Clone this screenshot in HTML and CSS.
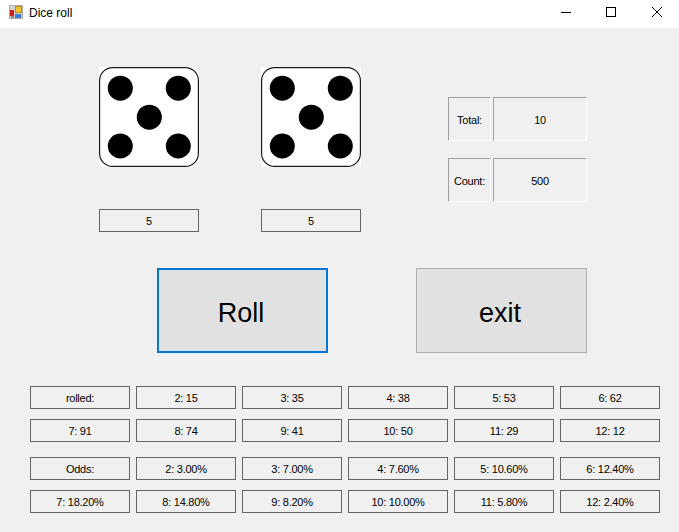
FILE: index.html
```html
<!DOCTYPE html>
<html lang="en">
<head>
    <meta charset="UTF-8">
    <title>Dice roll</title>
    <link rel="stylesheet" href="styles.css">
</head>
<body>
    <!-- title bar -->
    <header class="titlebar">
        <svg class="app-icon" width="14" height="14" viewBox="0 0 14 14">
            <rect x="0" y="0" width="14" height="14" fill="#d4d4d4"/>
            <rect x="0.5" y="0.5" width="13" height="13" fill="none" stroke="#a8a8a8"/>
            <rect x="1" y="5" width="4" height="6" fill="#c8201c"/>
            <rect x="2" y="11" width="3" height="2" fill="#8c8c8c"/>
            <rect x="6.5" y="1.5" width="6" height="6" fill="#f6c52e" stroke="#b8901c"/>
            <rect x="6" y="9" width="6" height="4" fill="#3f7fdc"/>
        </svg>
        <span class="title">Dice roll</span>
        <div class="win-buttons">
            <span class="win-btn">
                <svg width="12" height="12" viewBox="0 0 12 12"><path d="M1 6.5H11" stroke="#000" fill="none"/></svg>
            </span>
            <span class="win-btn">
                <svg width="12" height="12" viewBox="0 0 12 12"><rect x="1.5" y="1.5" width="9" height="9" stroke="#000" fill="none"/></svg>
            </span>
            <span class="win-btn">
                <svg width="12" height="12" viewBox="0 0 12 12"><path d="M2 1L12 11M12 1L2 11" stroke="#000" fill="none"/></svg>
            </span>
        </div>
    </header>

    <div class="form">
        <!-- dice and totals -->
        <div class="top">
            <div class="die-col">
                <svg class="die" width="100" height="100" viewBox="0 0 100 100">
                    <rect width="100" height="100" fill="#fff"/>
                    <rect x="0.6" y="0.6" width="98.8" height="98.8" rx="13" fill="#fff" stroke="#1c1c1c" stroke-width="1.2"/>
                    <circle cx="21.3" cy="21.2" r="12.5"/>
                    <circle cx="79.3" cy="21.2" r="12.5"/>
                    <circle cx="50.3" cy="50.2" r="12.5"/>
                    <circle cx="21.3" cy="79" r="12.5"/>
                    <circle cx="79.3" cy="79" r="12.5"/>
                </svg>
                <div class="box">5</div>
            </div>
            <div class="die-col">
                <svg class="die" width="100" height="100" viewBox="0 0 100 100">
                    <rect width="100" height="100" fill="#fff"/>
                    <rect x="0.6" y="0.6" width="98.8" height="98.8" rx="13" fill="#fff" stroke="#1c1c1c" stroke-width="1.2"/>
                    <circle cx="21.3" cy="21.2" r="12.5"/>
                    <circle cx="79.3" cy="21.2" r="12.5"/>
                    <circle cx="50.3" cy="50.2" r="12.5"/>
                    <circle cx="21.3" cy="79" r="12.5"/>
                    <circle cx="79.3" cy="79" r="12.5"/>
                </svg>
                <div class="box">5</div>
            </div>
            <div class="stats">
                <div class="stat-row">
                    <div class="sunken stat-label">Total:</div>
                    <div class="sunken stat-value">10</div>
                </div>
                <div class="stat-row">
                    <div class="sunken stat-label">Count:</div>
                    <div class="sunken stat-value">500</div>
                </div>
            </div>
        </div>

        <!-- buttons -->
        <div class="actions">
            <button class="button button-focus">Roll</button>
            <button class="button">exit</button>
        </div>

        <!-- rolled counts -->
        <div class="table">
            <div class="box">rolled:</div>
            <div class="box">2: 15</div>
            <div class="box">3: 35</div>
            <div class="box">4: 38</div>
            <div class="box">5: 53</div>
            <div class="box">6: 62</div>
            <div class="box">7: 91</div>
            <div class="box">8: 74</div>
            <div class="box">9: 41</div>
            <div class="box">10: 50</div>
            <div class="box">11: 29</div>
            <div class="box">12: 12</div>
        </div>

        <!-- odds -->
        <div class="table table-odds">
            <div class="box">Odds:</div>
            <div class="box">2: 3.00%</div>
            <div class="box">3: 7.00%</div>
            <div class="box">4: 7.60%</div>
            <div class="box">5: 10.60%</div>
            <div class="box">6: 12.40%</div>
            <div class="box">7: 18.20%</div>
            <div class="box">8: 14.80%</div>
            <div class="box">9: 8.20%</div>
            <div class="box">10: 10.00%</div>
            <div class="box">11: 5.80%</div>
            <div class="box">12: 2.40%</div>
        </div>
    </div>
</body>
</html>
```

FILE: styles.css
```css
html, body {
    height: 100%;
}
body {
    margin: 0;
    overflow: hidden;
    background-color: #f0f0f0;
    color: #000;
    font-family: "Liberation Sans", Arial, sans-serif;
    font-size: 11px;
    letter-spacing: -0.25px;
}

/* title bar */
.titlebar {
    display: flex;
    align-items: center;
    height: 28px;
    padding-left: 9px;
    background-color: #fff;
}
.app-icon {
    margin-bottom: 4px;
}
.title {
    margin-left: 6px;
    margin-bottom: 2px;
    font-size: 12px;
    letter-spacing: 0;
}
.win-buttons {
    display: flex;
    margin-left: auto;
    padding-right: 1px;
}
.win-btn {
    display: flex;
    align-items: center;
    justify-content: center;
    width: 45px;
    height: 24px;
    margin-bottom: 4px;
}

/* form */
.form {
    padding-top: 39px;
}
.top {
    display: flex;
    padding-left: 99px;
}
.die-col {
    width: 100px;
    margin-right: 62px;
}
.die {
    display: block;
    margin-bottom: 42px;
}
.box {
    display: flex;
    align-items: center;
    justify-content: center;
    box-sizing: border-box;
    height: 23px;
    border: 1px solid #646464;
    background-color: #f0f0f0;
}

/* total and count */
.stats {
    display: flex;
    flex-direction: column;
    gap: 17px;
    margin-top: 30px;
    margin-left: 25px;
}
.stat-row {
    display: flex;
    gap: 2px;
}
.sunken {
    display: flex;
    align-items: center;
    justify-content: center;
    box-sizing: border-box;
    height: 44px;
    padding-top: 2px;
    border: 1px solid;
    border-color: #a0a0a0 #fff #fff #a0a0a0;
}
.stat-label {
    width: 43px;
}
.stat-value {
    width: 94px;
}

/* buttons */
.actions {
    display: flex;
    gap: 88px;
    margin-top: 36px;
    padding-left: 157px;
}
.button {
    box-sizing: border-box;
    width: 171px;
    height: 85px;
    padding: 5px 3px 0 0;
    border: 1px solid #adadad;
    border-radius: 0;
    background-color: #e1e1e1;
    color: #000;
    font-family: inherit;
    font-size: 27px;
    letter-spacing: 0;
}
.button-focus {
    border: 2px solid #0078d7;
}

/* rolled and odds tables */
.table {
    display: grid;
    grid-template-columns: repeat(6, 100px);
    gap: 10px 6px;
    margin-top: 33px;
    padding-left: 30px;
}
.table-odds {
    margin-top: 15px;
}
```
